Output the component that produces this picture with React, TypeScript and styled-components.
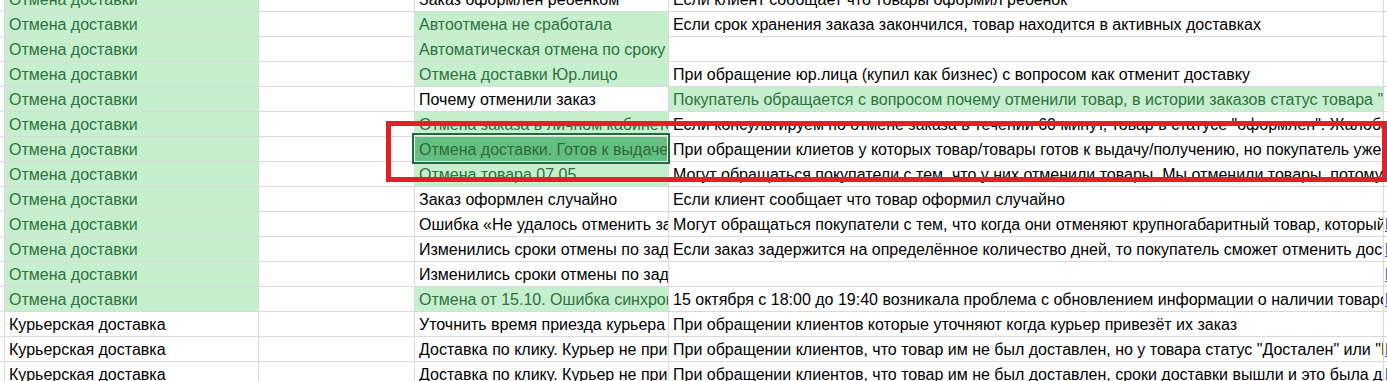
import React from "react";
import styled, { createGlobalStyle, css } from "styled-components";

const Global = createGlobalStyle`
  html, body { margin: 0; padding: 0; background: #ffffff; overflow: hidden; }
  body { font-family: "Liberation Sans", Arial, sans-serif; }
`;

const Page = styled.div`
  position: relative;
  width: 1387px;
  height: 381px;
  overflow: hidden;
  background: #fff;
`;

const Sheet = styled.div`
  display: flex;
  flex-direction: column;
  margin-top: -13px;
`;

const Row = styled.div`
  display: grid;
  grid-template-columns: 5px 254px 156px 254px 715px 40px;
  height: 25px;
`;

type Tone = "plain" | "green" | "selected";

const Cell = styled.div<{ $tone?: Tone; $link?: boolean }>`
  box-sizing: border-box;
  height: 25px;
  border-right: 1px solid #dadada;
  border-bottom: 1px solid #dadada;
  padding: 1px 0 0 4px;
  font-size: 16px;
  line-height: 23px;
  color: #000;
  background: #fff;
  ${(p) =>
    p.$tone === "green" &&
    css`
      background: #c6efce;
      color: #2f7140;
    `}
  ${(p) =>
    p.$tone === "selected" &&
    css`
      position: relative;
      z-index: 2;
      background: #66bf82;
      color: #2b6a3b;
    `}
  ${(p) =>
    p.$link &&
    css`
      padding-left: 1px;
      color: #1155cc;
      text-decoration: underline;
    `}
`;

const Text = styled.span`
  display: block;
  overflow: hidden;
  white-space: nowrap;
`;

const Selection = styled.div`
  position: absolute;
  top: -4px;
  left: -3px;
  right: -2px;
  bottom: -3px;
  border: 2px solid #1f6b3c;
  box-shadow: inset 0 0 0 1px #e8f5ec;
  pointer-events: none;
`;

const Annotation = styled.div`
  position: absolute;
  left: 386px;
  top: 121px;
  width: 1001px;
  height: 61px;
  box-sizing: border-box;
  border: 5px solid #e3202a;
  z-index: 5;
  pointer-events: none;
`;

type RowData = {
  a: string;
  aGreen: boolean;
  c: string;
  cTone: Tone;
  d: string;
  dGreen?: boolean;
  link?: boolean;
};

const A = "Отмена доставки";
const K = "Курьерская доставка";

const rows: RowData[] = [
  { a: A, aGreen: true, c: "Заказ оформлен ребенком", cTone: "plain", d: "Если клиент сообщает что товары оформил ребенок" },
  { a: A, aGreen: true, c: "Автоотмена не сработала", cTone: "green", d: "Если срок хранения заказа закончился, товар находится в активных доставках" },
  { a: A, aGreen: true, c: "Автоматическая отмена по сроку хранения", cTone: "green", d: "" },
  { a: A, aGreen: true, c: "Отмена доставки Юр.лицо", cTone: "green", d: "При обращение юр.лица (купил как бизнес) с вопросом как отменит доставку" },
  { a: A, aGreen: true, c: "Почему отменили заказ", cTone: "plain", d: "Покупатель обращается с вопросом почему отменили товар, в истории заказов статус товара \"Отменён\"", dGreen: true },
  { a: A, aGreen: true, c: "Отмена заказа в личном кабинете", cTone: "green", d: "Если консультируем по отмене заказа в течении 60 минут, товар в статусе \"оформлен\". Жалоба" },
  { a: A, aGreen: true, c: "Отмена доставки. Готов к выдаче", cTone: "selected", d: "При обращении клиетов у которых товар/товары готов к выдачу/получению, но покупатель уже не хочет" },
  { a: A, aGreen: true, c: "Отмена товара 07.05", cTone: "green", d: "Могут обращаться покупатели с тем, что у них отменили товары. Мы отменили товары, потому что" },
  { a: A, aGreen: true, c: "Заказ оформлен случайно", cTone: "plain", d: "Если клиент сообщает что товар оформил случайно" },
  { a: A, aGreen: true, c: "Ошибка «Не удалось отменить заказ»", cTone: "plain", d: "Могут обращаться покупатели с тем, что когда они отменяют крупногабаритный товар, который", link: true },
  { a: A, aGreen: true, c: "Изменились сроки отмены по задержке", cTone: "plain", d: "Если заказ задержится на определённое количество дней, то покупатель сможет отменить доставку", link: true },
  { a: A, aGreen: true, c: "Изменились сроки отмены по задержке", cTone: "plain", d: "", link: true },
  { a: A, aGreen: true, c: "Отмена от 15.10. Ошибка синхронизации", cTone: "green", d: "15 октября с 18:00 до 19:40 возникала проблема с обновлением информации о наличии товаров", link: true },
  { a: K, aGreen: false, c: "Уточнить время приезда курьера", cTone: "plain", d: "При обращении клиентов которые уточняют когда курьер привезёт их заказ" },
  { a: K, aGreen: false, c: "Доставка по клику. Курьер не пришёл", cTone: "plain", d: "При обращении клиентов, что товар им не был доставлен, но у товара статус \"Достален\" или \"Вручен\"", link: true },
  { a: K, aGreen: false, c: "Доставка по клику. Курьер не пришёл", cTone: "plain", d: "При обращении клиентов, что товар им не был доставлен, сроки доставки вышли и это была доставка", link: true },
];

export default function App() {
  return (
    <Page>
      <Global />
      <Sheet>
        {rows.map((r, i) => (
          <Row key={i}>
            <Cell />
            <Cell $tone={r.aGreen ? "green" : "plain"}>
              <Text>{r.a}</Text>
            </Cell>
            <Cell />
            <Cell $tone={r.cTone}>
              <Text>{r.c}</Text>
              {r.cTone === "selected" && <Selection />}
            </Cell>
            <Cell $tone={r.dGreen ? "green" : "plain"}>
              <Text>{r.d}</Text>
            </Cell>
            <Cell $link={r.link}>
              <Text>{r.link ? "https://" : ""}</Text>
            </Cell>
          </Row>
        ))}
      </Sheet>
      <Annotation />
    </Page>
  );
}
